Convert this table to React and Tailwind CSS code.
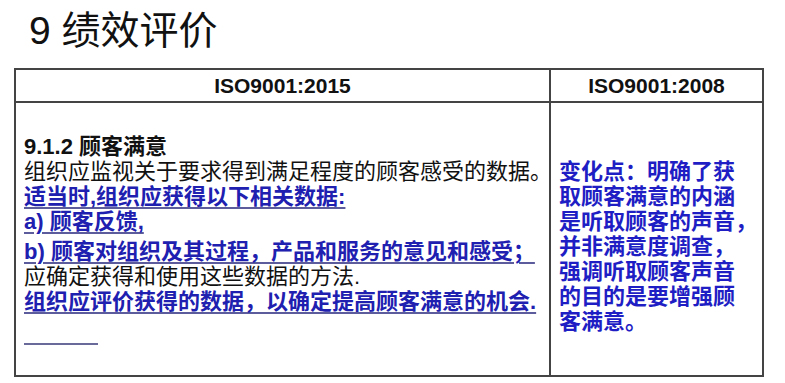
export default function App() {
	const font = "font-['Liberation_Sans','Noto_Sans_CJK_SC',sans-serif]";
	const blueLine =
		"text-[#2020b0] font-bold underline decoration-[#5c5c9c] decoration-2 underline-offset-[3px]";

	return (
		<div className={`w-[785px] h-[383px] bg-white overflow-hidden ${font}`}>
			<h1 className="pl-[29px] pt-[8px] h-[68px] text-[39px] leading-[46px] text-[#111] font-normal">
				9 绩效评价
			</h1>

			<div className="ml-[14px] w-[750px] border-2 border-[#444] grid grid-cols-[535px_1fr]">
				<div className="h-[33px] flex items-center justify-center border-r-2 border-b-2 border-[#444] text-[21px] font-bold text-[#111]">
					ISO9001:2015
				</div>
				<div className="h-[33px] flex items-center justify-center border-b-2 border-[#444] text-[21px] font-bold text-[#111]">
					ISO9001:2008
				</div>

				<div className="h-[272px] border-r-2 border-[#444] pl-[8px] pt-[31px] text-[22px] leading-[25px] whitespace-nowrap">
					<div className="font-bold text-[#111]">9.1.2 顾客满意</div>
					<div className="text-[#111]">
						组织应监视关于要求得到满足程度的顾客感受的数据。
					</div>
					<div>
						<span className={blueLine}>适当时,组织应获得以下相关数据:</span>
					</div>
					<div>
						<span className={blueLine}>a) 顾客反馈,</span>
					</div>
					<div className="mt-[5px]">
						<span className={blueLine}>
							b) 顾客对组织及其过程，产品和服务的意见和感受；
						</span>
					</div>
					<div className="text-[#111]">应确定获得和使用这些数据的方法.</div>
					<div>
						<span className={blueLine}>
							组织应评价获得的数据，以确定提高顾客满意的机会.
						</span>
					</div>
					<div className="mt-[29px] w-[74px] border-t-2 border-[#6a6a9a]" />
				</div>

				<div className="h-[272px] pl-[8px] pt-[56px] text-[22px] leading-[25px] font-bold text-[#1e1ec4] whitespace-nowrap">
					<div>变化点：明确了获</div>
					<div>取顾客满意的内涵</div>
					<div>是听取顾客的声音，</div>
					<div>并非满意度调查，</div>
					<div>强调听取顾客声音</div>
					<div>的目的是要增强顾</div>
					<div>客满意。</div>
				</div>
			</div>
		</div>
	);
}
